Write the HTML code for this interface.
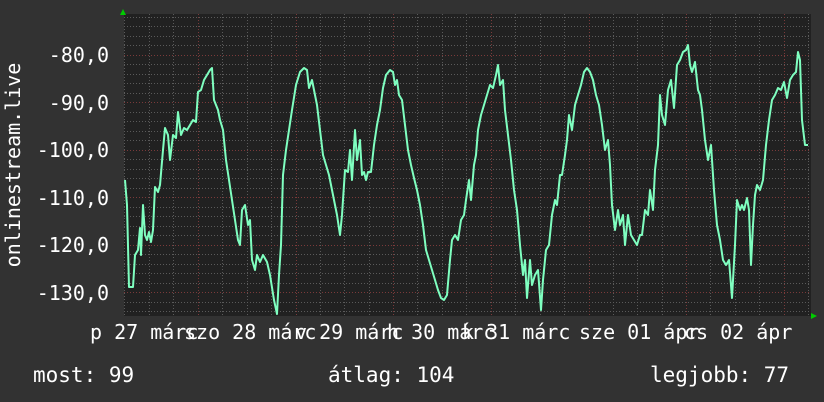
<!DOCTYPE html>
<html><head><meta charset="utf-8"><style>
html,body{margin:0;padding:0;background:#323232;}
svg{display:block}
text{font-family:"DejaVu Sans Mono","Liberation Mono",monospace;fill:#ffffff;}
</style></head><body>
<svg width="824" height="402" viewBox="0 0 824 402" xmlns="http://www.w3.org/2000/svg">
<rect width="824" height="402" fill="#323232"/>
<rect x="124" y="14" width="687" height="302" fill="#212121"/>
<g stroke="#5a5a5a" stroke-width="1" stroke-dasharray="1,2">
<path d="M124.5 14V316M149.5 14V316M173.5 14V316M222.5 14V316M247.5 14V316M271.5 14V316M320.5 14V316M344.5 14V316M369.5 14V316M417.5 14V316M442.5 14V316M466.5 14V316M515.5 14V316M540.5 14V316M564.5 14V316M613.5 14V316M637.5 14V316M662.5 14V316M710.5 14V316M735.5 14V316M759.5 14V316M808.5 14V316"/>
<path d="M124 17.5H811M124 26.5H811M124 36.5H811M124 45.5H811M124 64.5H811M124 74.5H811M124 83.5H811M124 93.5H811M124 112.5H811M124 121.5H811M124 131.5H811M124 140.5H811M124 159.5H811M124 169.5H811M124 178.5H811M124 188.5H811M124 207.5H811M124 216.5H811M124 226.5H811M124 235.5H811M124 254.5H811M124 264.5H811M124 273.5H811M124 283.5H811M124 302.5H811M124 311.5H811"/>
</g>
<g stroke="#7a3a3a" stroke-width="1" stroke-dasharray="1,2">
<path d="M198.5 14V316M296.5 14V316M393.5 14V316M491.5 14V316M589.5 14V316M686.5 14V316M784.5 14V316"/>
<path d="M124 55.5H811M124 102.5H811M124 150.5H811M124 197.5H811M124 245.5H811M124 292.5H811"/>
</g>
<path d="M120 15l3 -6 3 6z" fill="#00cc00"/>
<path d="M811 313l6 3 -6 3z" fill="#00cc00"/>
<polyline fill="none" stroke="#7fffc0" stroke-width="2" stroke-linejoin="round" points="125,180 127,205 129,287 133,287 135,255 138,250 140,228 141,255 143,205 145,235 147,240 149,232 151,242 153,230 155,187 158,192 160,185 163,150 165,128 168,135 170,160 173,135 176,138 178,112 181,135 184,128 187,130 190,125 193,120 196,122 198,92 201,90 204,80 207,75 210,70 212,68 214,100 218,110 220,120 223,130 226,160 229,180 232,200 235,220 238,240 240,245 242,210 245,205 248,225 250,220 252,260 255,270 257,255 260,262 263,255 267,262 270,275 274,300 277,314 279,275 281,245 283,175 286,150 289,130 292,110 296,85 300,72 304,68 307,70 309,88 312,80 314,90 317,105 320,130 323,155 326,165 329,175 332,190 334,200 337,215 340,235 342,215 345,170 348,172 350,150 352,180 355,130 357,160 360,140 362,175 364,172 366,180 368,172 371,172 374,145 377,125 380,110 383,88 386,75 390,70 393,72 395,85 397,80 399,95 402,100 405,125 408,150 411,165 414,178 417,190 420,205 423,225 426,250 429,260 432,270 435,280 438,290 441,298 444,300 447,295 450,260 452,240 455,235 458,240 461,220 464,215 466,200 469,180 471,200 474,165 476,155 478,130 481,115 484,105 487,95 490,85 493,88 496,75 498,65 500,85 503,80 505,110 508,135 511,160 514,190 517,210 520,245 523,275 525,260 527,298 530,260 532,285 535,275 538,270 541,310 543,280 546,250 549,245 552,215 555,200 557,205 560,175 562,175 565,155 567,140 569,115 572,130 575,105 578,95 581,85 584,72 587,68 590,72 593,80 596,95 599,105 602,125 605,150 608,140 610,165 612,205 615,230 618,210 620,225 623,215 625,245 628,215 631,235 634,240 637,245 640,235 642,235 645,210 648,215 650,190 653,210 655,170 658,145 660,95 662,115 665,125 668,90 671,80 674,108 677,65 680,60 683,52 686,50 688,45 690,65 692,72 695,62 698,90 700,95 702,110 705,140 708,160 711,145 714,190 717,225 720,240 723,260 726,265 729,260 732,298 735,245 737,200 740,210 742,205 744,210 747,198 749,210 751,265 753,225 755,195 757,185 760,190 763,180 766,145 769,120 772,100 775,95 778,88 781,90 784,82 787,98 790,80 793,75 796,72 798,52 800,60 802,120 805,145 808,145"/>
<g font-size="20" text-anchor="end">
<text x="109" y="62">-80,0</text>
<text x="109" y="110">-90,0</text>
<text x="109" y="157">-100,0</text>
<text x="109" y="205">-110,0</text>
<text x="109" y="252">-120,0</text>
<text x="109" y="300">-130,0</text>
</g>
<text font-size="20" transform="translate(20,165) rotate(-90)" text-anchor="middle">onlinestream.live</text>
<g font-size="20">
<text x="90" y="339">p 27 márc</text>
<text x="184" y="339">szo 28 márc</text>
<text x="295" y="339">v 29 márc</text>
<text x="387" y="339">h 30 márc</text>
<text x="462" y="339">k 31 márc</text>
<text x="579" y="339">sze 01 ápr</text>
<text x="684" y="339">cs 02 ápr</text>
</g>
<g font-size="21">
<text x="33" y="382">most: 99</text>
<text x="328" y="382">átlag: 104</text>
<text x="650" y="382">legjobb: 77</text>
</g>
</svg>
</body></html>
